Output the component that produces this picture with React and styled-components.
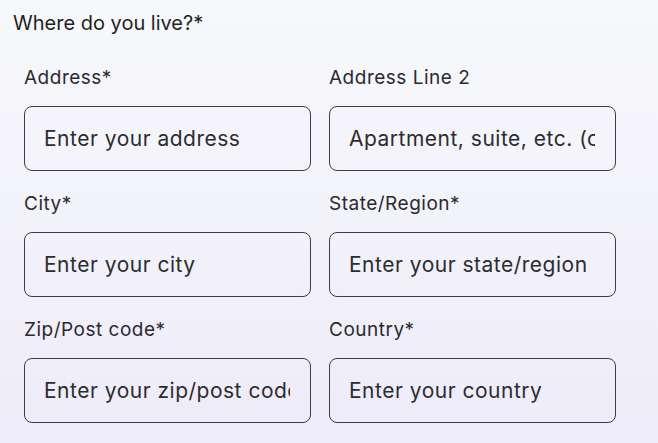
import React from "react";
import styled, { createGlobalStyle } from "styled-components";

const Global = createGlobalStyle`
  html, body { margin: 0; padding: 0; }
  body {
    width: 658px;
    height: 443px;
    overflow: hidden;
    font-family: Inter, "Noto Sans", sans-serif;
    background: linear-gradient(180deg, #f7f8fb 0%, #f3f3fa 45%, #eeebfa 100%);
  }
`;

const Page = styled.div`
  box-sizing: border-box;
  width: 658px;
  height: 443px;
  padding: 9px 0 0 13px;
`;

const Heading = styled.h2`
  margin: 0;
  font-size: 20px;
  line-height: 28px;
  font-weight: 400;
  color: #1f1f22;
`;

const Grid = styled.div`
  display: grid;
  grid-template-columns: 287px 287px;
  column-gap: 18px;
  row-gap: 21px;
  margin: 29px 0 0 11px;
`;

const Field = styled.label`
  display: flex;
  flex-direction: column;
  gap: 16px;
`;

const Label = styled.span`
  font-size: 19px;
  line-height: 24px;
  letter-spacing: 0.5px;
  color: #2a2a2e;
`;

const Input = styled.input`
  box-sizing: border-box;
  width: 100%;
  height: 65px;
  padding: 0 20px 0 19px;
  border: 1.3px solid #3d3d42;
  border-radius: 8px;
  background: transparent;
  font-family: inherit;
  font-size: 21px;
  letter-spacing: 0.5px;
  color: #26262a;
  outline: none;
  &::placeholder {
    color: #2c2c30;
    opacity: 1;
  }
`;

const fields = [
  { label: "Address*", placeholder: "Enter your address" },
  { label: "Address Line 2", placeholder: "Apartment, suite, etc. (optional)" },
  { label: "City*", placeholder: "Enter your city" },
  { label: "State/Region*", placeholder: "Enter your state/region" },
  { label: "Zip/Post code*", placeholder: "Enter your zip/post code" },
  { label: "Country*", placeholder: "Enter your country" },
];

export default function App() {
  return (
    <>
      <Global />
      <Page>
        <Heading>Where do you live?*</Heading>
        <Grid>
          {fields.map((f) => (
            <Field key={f.label}>
              <Label>{f.label}</Label>
              <Input placeholder={f.placeholder} />
            </Field>
          ))}
        </Grid>
      </Page>
    </>
  );
}
